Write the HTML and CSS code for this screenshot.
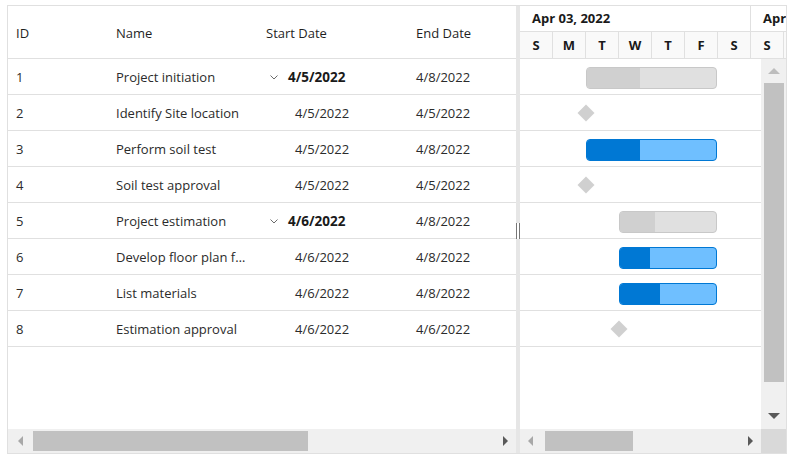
FILE: index.html
```html
<!DOCTYPE html>
<html>
<head>
<meta charset="utf-8">
<link rel="stylesheet" href="styles.css">
</head>
<body>
<div class="gantt">
  <div class="grid-pane">
    <div class="grid-header">
      <div class="cell c-id">ID</div>
      <div class="cell c-name">Name</div>
      <div class="cell c-start">Start Date</div>
      <div class="cell c-end">End Date</div>
    </div>
    <div class="grid-body">
      <div class="grow"><div class="cell c-id">1</div><div class="cell c-name">Project initiation</div><div class="cell c-start parent"><svg class="chev" width="8" height="5" viewBox="0 0 8 5"><path d="M0.5 0.5 L4 4 L7.5 0.5" fill="none" stroke="#6b6b6b" stroke-width="1"/></svg><b>4/5/2022</b></div><div class="cell c-end">4/8/2022</div></div>
      <div class="grow"><div class="cell c-id">2</div><div class="cell c-name">Identify Site location</div><div class="cell c-start child">4/5/2022</div><div class="cell c-end">4/5/2022</div></div>
      <div class="grow"><div class="cell c-id">3</div><div class="cell c-name">Perform soil test</div><div class="cell c-start child">4/5/2022</div><div class="cell c-end">4/8/2022</div></div>
      <div class="grow"><div class="cell c-id">4</div><div class="cell c-name">Soil test approval</div><div class="cell c-start child">4/5/2022</div><div class="cell c-end">4/5/2022</div></div>
      <div class="grow"><div class="cell c-id">5</div><div class="cell c-name">Project estimation</div><div class="cell c-start parent"><svg class="chev" width="8" height="5" viewBox="0 0 8 5"><path d="M0.5 0.5 L4 4 L7.5 0.5" fill="none" stroke="#6b6b6b" stroke-width="1"/></svg><b>4/6/2022</b></div><div class="cell c-end">4/8/2022</div></div>
      <div class="grow"><div class="cell c-id">6</div><div class="cell c-name">Develop floor plan for estimation</div><div class="cell c-start child">4/6/2022</div><div class="cell c-end">4/8/2022</div></div>
      <div class="grow"><div class="cell c-id">7</div><div class="cell c-name">List materials</div><div class="cell c-start child">4/6/2022</div><div class="cell c-end">4/8/2022</div></div>
      <div class="grow"><div class="cell c-id">8</div><div class="cell c-name">Estimation approval</div><div class="cell c-start child">4/6/2022</div><div class="cell c-end">4/6/2022</div></div>
    </div>
    <div class="hscroll">
      <div class="arrow-left dim"></div>
      <div class="hthumb grid-thumb"></div>
      <div class="hspace"></div>
      <div class="arrow-right"></div>
    </div>
  </div>
  <div class="splitter"><div class="grip"></div></div>
  <div class="chart-pane">
    <div class="chart-header">
      <div class="tier week-tier">
        <div class="week">Apr 03, 2022</div>
        <div class="week">Apr 10, 2022</div>
      </div>
      <div class="tier day-tier">
        <div class="day">S</div><div class="day">M</div><div class="day">T</div><div class="day">W</div><div class="day">T</div><div class="day">F</div><div class="day">S</div><div class="day">S</div>
      </div>
    </div>
    <div class="chart-body">
      <div class="chart-rows">
        <div class="crow"><div class="bar parent-bar" style="left:66px;width:131px"><div class="prog" style="width:53px"></div></div></div>
        <div class="crow"><div class="milestone" style="left:60px"></div></div>
        <div class="crow"><div class="bar child-bar" style="left:66px;width:131px"><div class="prog" style="width:53px"></div></div></div>
        <div class="crow"><div class="milestone" style="left:60px"></div></div>
        <div class="crow"><div class="bar parent-bar" style="left:99px;width:98px"><div class="prog" style="width:35px"></div></div></div>
        <div class="crow"><div class="bar child-bar" style="left:99px;width:98px"><div class="prog" style="width:30px"></div></div></div>
        <div class="crow"><div class="bar child-bar" style="left:99px;width:98px"><div class="prog" style="width:40px"></div></div></div>
        <div class="crow"><div class="milestone" style="left:93px"></div></div>
      </div>
      <div class="vscroll">
        <div class="arrow-up dim"></div>
        <div class="vthumb"></div>
        <div class="arrow-down"></div>
      </div>
    </div>
    <div class="chart-foot">
      <div class="hscroll chart-hscroll">
        <div class="arrow-left dim"></div>
        <div class="hthumb chart-thumb"></div>
        <div class="hspace"></div>
        <div class="arrow-right"></div>
      </div>
      <div class="corner"></div>
    </div>
  </div>
</div>
</body>
</html>
```

FILE: styles.css
```css
* { box-sizing: border-box; }
html, body { margin: 0; padding: 0; background: #fff; }
body {
  font-family: "Open Sans", "Noto Sans", sans-serif;
  font-size: 13px;
  color: #2b2b2b;
}
.gantt {
  margin: 5px 0 0 7px;
  width: 780px;
  height: 449px;
  border: 1px solid #e0e0e0;
  display: flex;
  overflow: hidden;
}
.grid-pane {
  width: 508px;
  flex: none;
  display: flex;
  flex-direction: column;
  overflow: hidden;
}
.grid-header {
  height: 53px;
  border-bottom: 1px solid #e0e0e0;
  display: flex;
  align-items: center;
  flex: none;
  color: #1f1f1f;
  padding-top: 1px;
}
.grid-body { flex: 1; overflow: hidden; }
.grow {
  height: 36px;
  border-bottom: 1px solid #e0e0e0;
  display: flex;
  align-items: center;
  padding-top: 1px;
}
.cell {
  flex: none;
  padding: 0 8px;
  white-space: nowrap;
  overflow: hidden;
  text-overflow: ellipsis;
}
.c-id { width: 100px; }
.c-name { width: 150px; }
.c-start { width: 150px; }
.c-end { width: 108px; }
.c-start.child { padding-left: 37px; }
.c-start.parent { display: flex; align-items: center; padding-left: 12px; }
.chev { margin-right: 10px; flex: none; }
.c-start b { font-weight: 700; color: #1a1a1a; font-size: 13.5px; }

.hscroll {
  height: 24px;
  flex: none;
  background: #f0f0f0;
  display: flex;
  align-items: center;
  padding: 0 8px 0 10px;
}
.hthumb { height: 20px; background: #c1c1c1; margin-top: 2px; align-self: flex-start; }
.grid-thumb { width: 275px; margin-left: 10px; }
.chart-thumb { width: 88px; margin-left: 15px; }
.hspace { flex: 1; }
.arrow-left, .arrow-right { width: 0; height: 0; border-top: 5px solid transparent; border-bottom: 5px solid transparent; flex: none; }
.arrow-left { border-right: 5px solid #595959; }
.arrow-right { border-left: 5px solid #595959; }
.arrow-left.dim { border-right-color: #a8a8a8; }

.splitter {
  width: 4px;
  flex: none;
  background: #e6e6e6;
  display: flex;
  align-items: center;
  justify-content: center;
}
.grip {
  width: 4px;
  height: 16px;
  background: #fff;
  border-left: 1px solid #777;
  border-right: 1px solid #777;
  margin-top: 2px;
}

.chart-pane {
  flex: 1;
  display: flex;
  flex-direction: column;
  overflow: hidden;
}
.chart-header {
  height: 53px;
  flex: none;
  border-bottom: 1px solid #e0e0e0;
  overflow: hidden;
  font-weight: 700;
  color: #1a1a1a;
}
.tier { display: flex; }
.week-tier { height: 26px; border-bottom: 1px solid #e0e0e0; }
.week {
  width: 231px;
  flex: none;
  padding-left: 12px;
  border-right: 1px solid #e0e0e0;
  line-height: 25px;
  white-space: nowrap;
  overflow: hidden;
}
.day-tier { height: 26px; background: #f9f9f9; }
.day {
  width: 33px;
  flex: none;
  text-align: center;
  border-right: 1px solid #e0e0e0;
  line-height: 26px;
}
.chart-body { flex: 1; display: flex; overflow: hidden; }
.chart-rows { flex: 1; overflow: hidden; }
.crow {
  height: 36px;
  border-bottom: 1px solid #e0e0e0;
  position: relative;
}
.bar {
  position: absolute;
  top: 8px;
  height: 22px;
  border-radius: 4px;
  overflow: hidden;
}
.parent-bar { background: #e0e0e0; border: 1px solid #c8c8c8; }
.parent-bar .prog { background: #d0d0d0; }
.child-bar { background: #6fbfff; border: 1px solid #0078d4; }
.child-bar .prog { background: #0078d4; }
.prog { height: 100%; }
.milestone {
  position: absolute;
  top: 12px;
  width: 12px;
  height: 12px;
  background: #d0d0d0;
  transform: rotate(45deg);
}
.vscroll {
  width: 25px;
  flex: none;
  background: #f0f0f0;
  display: flex;
  flex-direction: column;
  align-items: center;
  padding: 9px 0 10px;
}
.vthumb { width: 20px; flex: 1; background: #c1c1c1; margin: 9px 0 31px; }
.arrow-up, .arrow-down { width: 0; height: 0; border-left: 6px solid transparent; border-right: 6px solid transparent; flex: none; }
.arrow-up { border-bottom: 6px solid #595959; }
.arrow-up.dim { border-bottom-color: #bdbdbd; }
.arrow-down { border-top: 6px solid #595959; }
.chart-foot { height: 24px; flex: none; display: flex; }
.chart-hscroll { flex: 1; padding-left: 8px; padding-right: 8px; }
.chart-hscroll .chart-thumb { margin-left: 12px; }
.corner { width: 25px; background: #d9d9d9; flex: none; }
```
